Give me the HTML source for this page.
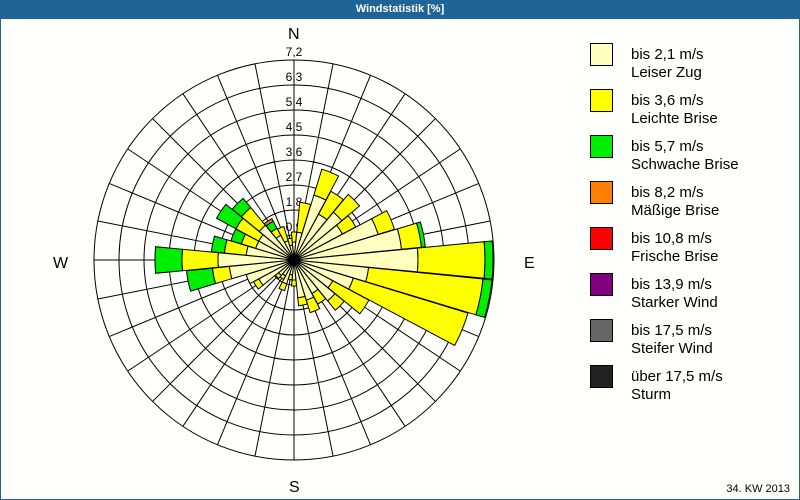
<!DOCTYPE html>
<html><head><meta charset="utf-8"><style>
html,body{margin:0;padding:0;background:#fffffb;}
#w{position:relative;width:800px;height:500px;overflow:hidden;background:#fffffb;font-family:"Liberation Sans","DejaVu Sans",sans-serif;}
#t{position:absolute;left:0;top:0;width:800px;height:19px;background:#1e6496;color:#fff;font-weight:bold;font-size:11px;line-height:19px;text-align:center;}
#fr{position:absolute;left:0;top:0;width:798px;height:498px;border:1px solid #1e6496;}
svg{position:absolute;left:0;top:0;}
.lg{position:absolute;left:590px;width:21px;height:21px;border:1px solid #000;}
.lt{position:absolute;left:631px;font-size:15px;line-height:18px;color:#000;}
.d{position:absolute;font-size:16px;color:#000;}
#f{position:absolute;right:10px;top:483px;font-size:11px;}
</style></head><body><div id="w">
<svg id="s" width="800" height="500"></svg>
<div id="t">Windstatistik [%]</div>
<div id="fr"></div>
<div class="d" style="left:288px;top:26px">N</div>
<div class="d" style="left:289px;top:479px">S</div>
<div class="d" style="left:53px;top:255px">W</div>
<div class="d" style="left:524px;top:255px">E</div>
<div class="lg" style="top:43px;background:#ffffc0"></div>
<div class="lt" style="top:46px">bis 2,1 m/s<br>Leiser Zug</div>
<div class="lg" style="top:89px;background:#ffff00"></div>
<div class="lt" style="top:92px">bis 3,6 m/s<br>Leichte Brise</div>
<div class="lg" style="top:135px;background:#00ee00"></div>
<div class="lt" style="top:138px">bis 5,7 m/s<br>Schwache Brise</div>
<div class="lg" style="top:181px;background:#ff8000"></div>
<div class="lt" style="top:184px">bis 8,2 m/s<br>Mäßige Brise</div>
<div class="lg" style="top:227px;background:#ff0000"></div>
<div class="lt" style="top:230px">bis 10,8 m/s<br>Frische Brise</div>
<div class="lg" style="top:273px;background:#800080"></div>
<div class="lt" style="top:276px">bis 13,9 m/s<br>Starker Wind</div>
<div class="lg" style="top:319px;background:#666666"></div>
<div class="lt" style="top:322px">bis 17,5 m/s<br>Steifer Wind</div>
<div class="lg" style="top:365px;background:#222222"></div>
<div class="lt" style="top:368px">über 17,5 m/s<br>Sturm</div>
<div id="f">34. KW 2013</div>
</div>
<script>
var cx=294,cy=260,s=document.getElementById('s'),h='';
for(var r=25;r<=200;r+=25)h+='<circle cx="'+cx+'" cy="'+cy+'" r="'+r+'" fill="none" stroke="#000" stroke-width="1"/>';
for(var i=0;i<32;i++){var a=i*11.25*Math.PI/180;h+='<line x1="'+cx+'" y1="'+cy+'" x2="'+(cx+200*Math.sin(a))+'" y2="'+(cy-200*Math.cos(a))+'" stroke="#000" stroke-width="1"/>';}
var lb=['0,9','1,8','2,7','3,6','4,5','5,4','6,3','7,2'];
for(var k=0;k<8;k++)h+='<text x="'+cx+'" y="'+(cy-25*(k+1)-4)+'" font-size="12" text-anchor="middle" font-family="Liberation Sans, sans-serif" fill="#000">'+lb[k]+'</text>';
var D=[[18,28],[28,58],[68,95],[52,78],[62,85],[55,70],[88,105],[108,128,132],[124,191,199],[75,190,199],[62,182],[44,85],[53,65],[38,50],[42,55],[38,46],[20,26],[15,20],[25,32],[18,22],[20,24],[40,46],[50],[65,82,108],[76,112,139],[48,70,83],[40,55,66],[40,66,88],[45,68,80],[28,36,44,47],[20,35],[15,22]];
var C=['#ffffc0','#ffff00','#00ee00','#ff8000'];
function seg(a,r0,r1,c){var a0=(a-5.5)*Math.PI/180,a1=(a+5.5)*Math.PI/180;
function p(r,t){return (cx+r*Math.sin(t)).toFixed(1)+','+(cy-r*Math.cos(t)).toFixed(1);}
return '<path d="M'+p(r0,a0)+' L'+p(r1,a0)+' A'+r1+','+r1+' 0 0 1 '+p(r1,a1)+' L'+p(r0,a1)+(r0>0?' A'+r0+','+r0+' 0 0 0 '+p(r0,a0):'')+' Z" fill="'+c+'" stroke="#000" stroke-width="1"/>';}
for(var i=0;i<32;i++){var d=D[i],r0=0;for(var j=0;j<d.length;j++){h+=seg(i*11.25,r0,d[j],C[j]);r0=d[j];}}
h+='<circle cx="'+cx+'" cy="'+cy+'" r="6" fill="#000"/>';
s.innerHTML=h;
</script>
</body></html>
